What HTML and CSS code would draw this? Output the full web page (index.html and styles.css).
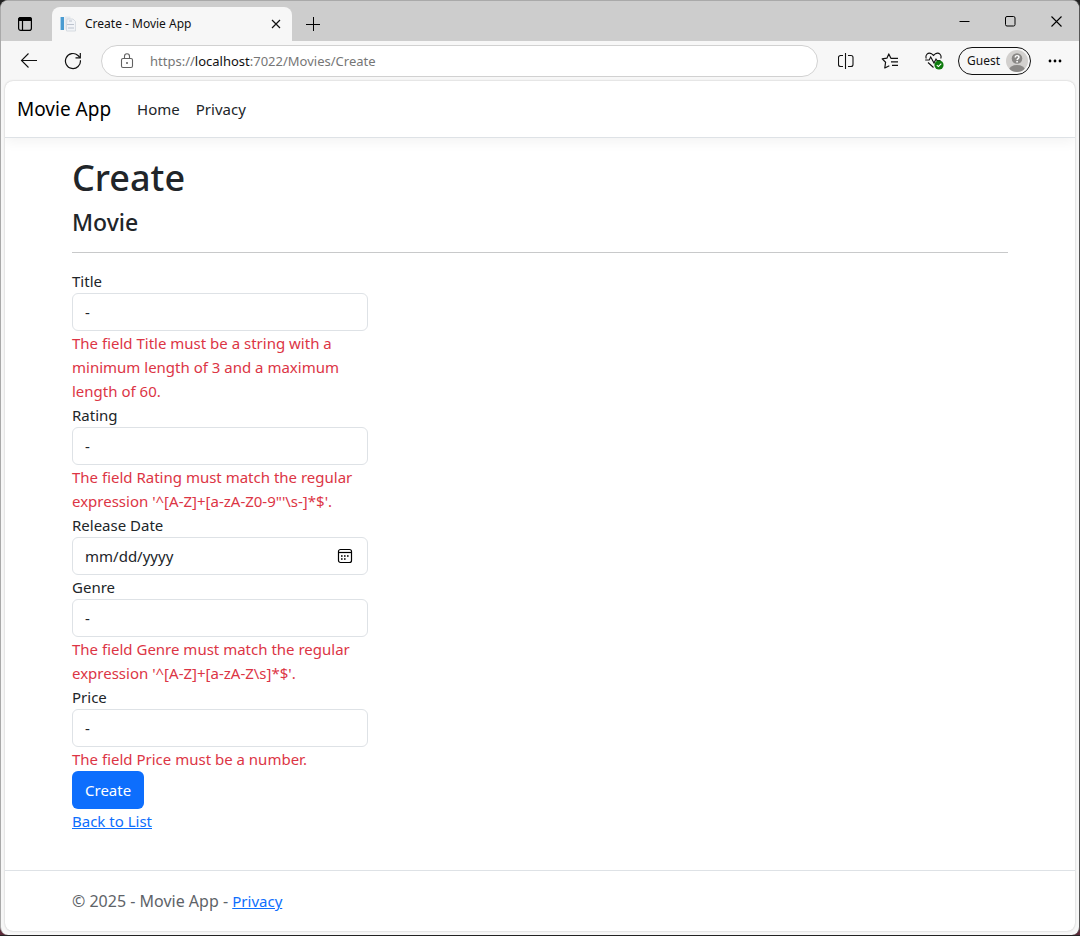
FILE: index.html
```html
<!DOCTYPE html>
<html lang="en">
<head>
<meta charset="utf-8">
<meta name="viewport" content="width=device-width, initial-scale=1">
<title>Create - Movie App</title>
<link rel="stylesheet" href="styles.css">
</head>
<body>
<div class="window">
  <div class="titlebar">
    <button class="tab-actions" type="button" aria-label="Tab actions menu">
      <svg width="16" height="16" viewBox="0 0 16 16" fill="none" stroke="#000" stroke-width="1.2"><rect x="1.6" y="1.6" width="12.8" height="12.8" rx="2.2"/><path d="M1.6 4V3.400c0-1 .8-1.800 1.800-1.800h9.200c1 0 1.800.8 1.800 1.800V4.500H1.600z" fill="#000"/><path d="M5.500 5v9.200"/></svg>
    </button>
    <div class="tab">
      <svg class="favicon" width="16" height="16" viewBox="0 0 16 16"><rect x="0" y="1" width="4" height="13" fill="#4a9bd1"/><rect x="0" y="1" width="1" height="13" fill="#a9d2ec"/><path d="M4.500 0.500h6v13h-6z" fill="#e6e9ee"/><path d="M7 3h6l2.500 2.500V15H6.500V9z" fill="#f1f3f7" stroke="#d0d5dc" stroke-width=".8"/><path d="M7 8.500h7M8 12h6M9 5h3" stroke="#bcc3ce"/></svg>
      <span class="tab-title">Create - Movie App</span>
      <button class="tab-close" type="button" aria-label="Close tab">
        <svg width="10" height="10" viewBox="0 0 10 10" stroke="#111" stroke-width="1.200"><path d="M1 1l8 8M9 1L1 9"/></svg>
      </button>
    </div>
    <button class="new-tab" type="button" aria-label="New tab">
      <svg width="14" height="14" viewBox="0 0 14 14" stroke="#000" stroke-width="1"><path d="M7.500 0v14M0 7.500h14"/></svg>
    </button>
    <div class="window-controls">
      <button type="button" aria-label="Minimize"><svg width="11" height="11" viewBox="0 0 11 11"><path d="M.5 5.500h10" stroke="#000"/></svg></button>
      <button type="button" aria-label="Maximize"><svg width="11" height="11" viewBox="0 0 11 11"><rect x=".5" y=".5" width="9.500" height="9.500" rx="1.500" fill="none" stroke="#000"/></svg></button>
      <button type="button" aria-label="Close"><svg width="11" height="11" viewBox="0 0 11 11"><path d="M.5.5l10 10M10.500.5l-10 10" stroke="#000" stroke-width="1.100"/></svg></button>
    </div>
  </div>

  <div class="toolbar">
    <button class="tool" type="button" aria-label="Back">
      <svg width="18" height="16" viewBox="0 0 18 16" fill="none" stroke="#111" stroke-width="1.100"><path d="M17 7.500H1.500M8.500.5l-7 7 7 7"/></svg>
    </button>
    <button class="tool" type="button" aria-label="Refresh">
      <svg width="18" height="18" viewBox="0 0 18 18" fill="none" stroke="#111" stroke-width="1.200"><path d="M16.400 8.200A7.500 7.500 0 1 1 14 3.500l2 2"/><path d="M16.300 1v4.800h-4.800"/></svg>
    </button>
    <div class="address">
      <svg width="14" height="16" viewBox="0 0 14 16" fill="none" stroke="#616161" stroke-width="1.100"><rect x="1.500" y="5.500" width="11" height="9" rx="1.500"/><path d="M4.500 5.500V3.200a2.500 2.500 0 0 1 5 0v2.300"/><circle cx="7" cy="10" r="1" fill="#616161" stroke="none"/></svg>
      <div class="url" role="textbox" aria-label="Address and search bar">https://<span class="host">localhost</span>:7022/Movies/Create</div>
    </div>
    <button class="tool" type="button" aria-label="Split screen">
      <svg width="16" height="16" viewBox="0 0 16 16" fill="none" stroke="#111" stroke-width="1.100"><path d="M5 2.500H2.500a2 2 0 0 0-2 2v7a2 2 0 0 0 2 2H5M10 2.500h3a2 2 0 0 1 2 2v7a2 2 0 0 1-2 2H10M7.500 0v16"/></svg>
    </button>
    <button class="tool" type="button" aria-label="Favorites">
      <svg width="18" height="16" viewBox="0 0 18 16" fill="none" stroke="#111" stroke-width="1.200" stroke-linejoin="round"><path d="M12 5.300H9.900L7.800.9 5.900 5.200l-4.700.7 3.400 3.300-.8 5.800 4.500-2.200M11 5.300h6M10 8.800h7M11 12.300h6"/></svg>
    </button>
    <button class="tool" type="button" aria-label="Browser essentials">
      <svg width="20" height="18" viewBox="0 0 20 18" fill="none" stroke="#111" stroke-width="1.100"><path d="M2.300 6.500C.9 3 4-.2 7.500 1.700L9.500 3.500l2-1.800C15-.2 18.100 3 16.700 6.500M4 10.500l5.500 5M1.200 8h4l1.500-3 3.300 6 2-4 1 1.500h3.500"/><circle cx="15" cy="13" r="4.600" fill="#0f7b0f" stroke="none"/><path d="M12.800 13.100l1.600 1.500 2.900-3" stroke="#fff"/></svg>
    </button>
    <button class="profile" type="button">
      <span>Guest</span>
      <svg width="22" height="22" viewBox="0 0 22 22"><defs><clipPath id="avatar"><circle cx="11" cy="11" r="11"/></clipPath></defs><g clip-path="url(#avatar)"><rect width="22" height="22" fill="#d2d0ce"/><circle cx="11" cy="8.500" r="5.300" fill="#8a8886"/><ellipse cx="11" cy="20" rx="8" ry="5" fill="#8a8886"/></g><path d="M9.200 7.500c0-2.600 3.800-2.400 3.800-.2 0 1.300-1.900 1.400-1.900 2.800" fill="none" stroke="#fff" stroke-width="1.400"/><circle cx="11.100" cy="11.700" r=".9" fill="#fff"/></svg>
    </button>
    <button class="tool" type="button" aria-label="Settings and more">
      <svg width="14" height="4" viewBox="0 0 14 4"><circle cx="2" cy="2" r="1.400"/><circle cx="7" cy="2" r="1.400"/><circle cx="12" cy="2" r="1.400"/></svg>
    </button>
  </div>

  <div class="page">
    <header class="navbar">
      <a class="brand" href="#">Movie App</a>
      <nav class="nav">
        <a href="#">Home</a>
        <a href="#">Privacy</a>
      </nav>
    </header>

    <main class="container main">
      <h1>Create</h1>
      <h4>Movie</h4>
      <hr>
      <form class="form" novalidate>
        <div class="group">
          <label for="title">Title</label>
          <input class="control" id="title" type="text" value="-" aria-describedby="title-error">
          <span class="error" id="title-error">The field Title must be a string with a minimum length of 3 and a maximum length of 60.</span>
        </div>
        <div class="group">
          <label for="rating">Rating</label>
          <input class="control" id="rating" type="text" value="-" aria-describedby="rating-error">
          <span class="error" id="rating-error">The field Rating must match the regular expression '^[A-Z]+[a-zA-Z0-9"'\s-]*$'.</span>
        </div>
        <div class="group">
          <label for="release">Release Date</label>
          <div class="date">
            <input class="control" id="release" type="date">
            <svg class="calendar" width="16" height="16" viewBox="0 0 16 16" fill="none" stroke="#000" stroke-width="1.200"><rect x="1.500" y="1.500" width="13" height="13" rx="2"/><path d="M1.500 4.500h13"/><path d="M4 8h1.600m1.400 0h1.600m1.400 0h1.600M4 11h1.600m1.400 0h1.600" stroke-width="1.600"/></svg>
          </div>
        </div>
        <div class="group">
          <label for="genre">Genre</label>
          <input class="control" id="genre" type="text" value="-" aria-describedby="genre-error">
          <span class="error" id="genre-error">The field Genre must match the regular expression '^[A-Z]+[a-zA-Z\s]*$'.</span>
        </div>
        <div class="group">
          <label for="price">Price</label>
          <input class="control" id="price" type="text" value="-" aria-describedby="price-error">
          <span class="error" id="price-error">The field Price must be a number.</span>
        </div>
        <button class="submit" type="submit">Create</button>
      </form>
      <a class="link" href="#">Back to List</a>
    </main>

    <footer class="footer">
      <div class="container">&copy; 2025 - Movie App - <a class="link" href="#">Privacy</a></div>
    </footer>
  </div>
</div>
</body>
</html>
```

FILE: styles.css
```css
* {
  box-sizing: border-box;
}

body {
  margin: 0;
  background: linear-gradient(#222 0, #333 85%, #5c2a38 100%);
  color: #212529;
  font: 15px/24px "Segoe UI", "Noto Sans", "Open Sans", sans-serif;
}

button {
  display: flex;
  align-items: center;
  justify-content: center;
  padding: 0;
  border: 0;
  background: none;
  color: inherit;
  font: inherit;
}

svg {
  flex: none;
}

.window {
  display: flex;
  flex-direction: column;
  min-height: calc(100vh - 1px);
  border: 1px solid #a9a9a9;
  border-right-color: #555;
  border-bottom: 0;
  border-radius: 8px;
  background: #f7f7f7;
  overflow: hidden;
}

.titlebar {
  display: flex;
  align-items: stretch;
  height: 40px;
  background: #cdcdcd;
}

.tab-actions {
  width: 51px;
  padding: 6px 4px 0 0;
}

.tab {
  display: flex;
  align-items: center;
  gap: 9px;
  width: 240px;
  margin-top: 6px;
  padding: 0 8px;
  border-radius: 8px 8px 0 0;
  background: #f7f7f7;
  color: #111;
  font-size: 12px;
}

.tab-title {
  flex: 1;
}

.tab-close {
  width: 16px;
  height: 24px;
}

.new-tab {
  width: 42px;
  padding-top: 6px;
}

.window-controls {
  display: flex;
  margin-left: auto;
}

.window-controls button {
  width: 46px;
}

.toolbar {
  display: flex;
  align-items: center;
  height: 40px;
  padding: 0 2px 0 6px;
}

.tool {
  width: 44px;
  height: 32px;
}

.address {
  display: flex;
  flex: 1;
  align-items: center;
  gap: 16px;
  height: 32px;
  margin: 0 6px;
  padding: 0 18px;
  border: 1px solid #d1d1d1;
  border-radius: 16px;
  background: #fff;
}

.url {
  color: #767676;
  font-size: 13px;
}

.host {
  color: #111;
}

.profile {
  gap: 6px;
  height: 28px;
  margin: 0 2px;
  padding: 0 2px 0 8px;
  border: 1px solid #111;
  border-radius: 14px;
  color: #111;
  font-size: 12px;
}

.page {
  display: flex;
  flex: 1;
  flex-direction: column;
  margin: 0 4px 4px;
  border-radius: 8px;
  background: #fff;
  box-shadow: 0 0 2px rgba(0, 0, 0, .25);
  overflow: hidden;
}

.navbar {
  display: flex;
  align-items: center;
  gap: 26px;
  height: 57px;
  padding: 0 12px;
  border-bottom: 1px solid #dee2e6;
  box-shadow: 0 4px 12px rgba(0, 0, 0, .05);
}

.brand {
  color: #000;
  font-size: 19px;
  text-decoration: none;
}

.nav {
  display: flex;
  gap: 16px;
}

.nav a {
  color: #212529;
  text-decoration: none;
}

.container {
  width: 100%;
  max-width: 960px;
  margin: 0 auto;
  padding: 0 12px;
}

.main {
  flex: 1;
  padding-top: 16px;
  padding-bottom: 24px;
}

h1,
h4 {
  margin: 0 0 6px;
  font-weight: 500;
}

h1 {
  font-size: 36px;
  line-height: 48px;
}

h4 {
  margin-bottom: 0;
  font-size: 23px;
  line-height: 28px;
}

hr {
  margin: 16px 0;
  border: 0;
  border-top: 1px solid #c8c9ca;
}

.form {
  max-width: 296px;
}

.group {
  display: flex;
  flex-direction: column;
}

.control {
  display: block;
  width: 100%;
  height: 38px;
  padding: 0 12px;
  border: 1px solid #dee2e6;
  border-radius: 6px;
  background: #fff;
  color: #212529;
  font: inherit;
}

.control::-webkit-datetime-edit,
.control::-webkit-datetime-edit-fields-wrapper,
.control::-webkit-datetime-edit-text,
.control::-webkit-datetime-edit-month-field,
.control::-webkit-datetime-edit-day-field,
.control::-webkit-datetime-edit-year-field {
  padding: 0;
}

.control::-webkit-calendar-picker-indicator {
  opacity: 0;
}

.date {
  position: relative;
}

.calendar {
  position: absolute;
  top: 11px;
  right: 15px;
  pointer-events: none;
}

.error {
  color: #dc3545;
}

.submit {
  height: 38px;
  padding: 0 13px;
  border-radius: 6px;
  background: #0d6efd;
  color: #fff;
}

.link {
  color: #0d6efd;
}

.footer {
  border-top: 1px solid #dee2e6;
  color: #5e6368;
  font-size: 16px;
  line-height: 60px;
}

.footer .link {
  font-size: 15px;
}
```
